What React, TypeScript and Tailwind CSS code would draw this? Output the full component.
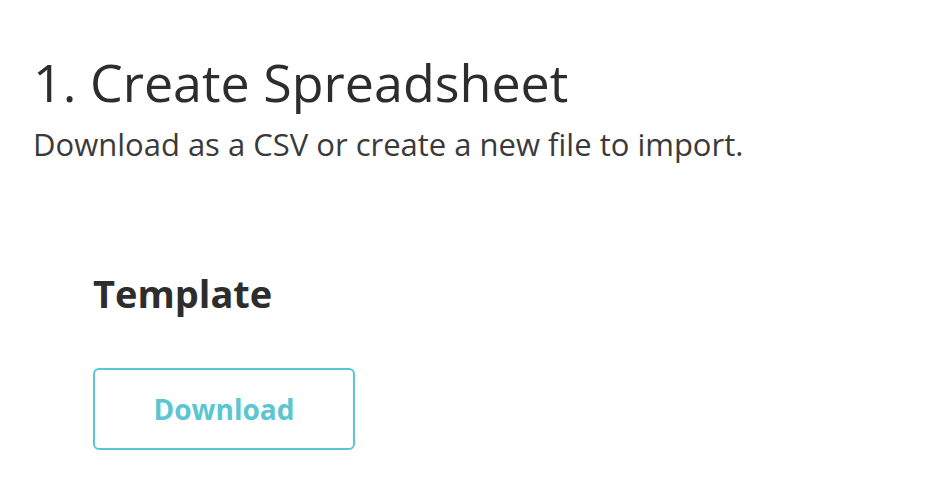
export default function App() {
  return (
    <div className="min-h-screen bg-white font-['Open_Sans',sans-serif] text-[#2d2d2d]">
      <div className="px-[33px] pt-[51px]">
        <h1 className="text-[52px] leading-[62px] font-normal">1. Create Spreadsheet</h1>
        <p className="mt-[11px] text-[31px] leading-[40px] text-[#3a3a3a]">
          Download as a CSV or create a new file to import.
        </p>
        <div className="pl-[60px] pt-[104px]">
          <h2 className="text-[38px] leading-[50px] font-bold">Template</h2>
          <button className="mt-[50px] flex h-[82px] w-[262px] items-center justify-center rounded-[6px] border-2 border-[#5bc6d2] text-[28px] font-bold text-[#5bc6d2]">
            Download
          </button>
        </div>
      </div>
    </div>
  );
}
